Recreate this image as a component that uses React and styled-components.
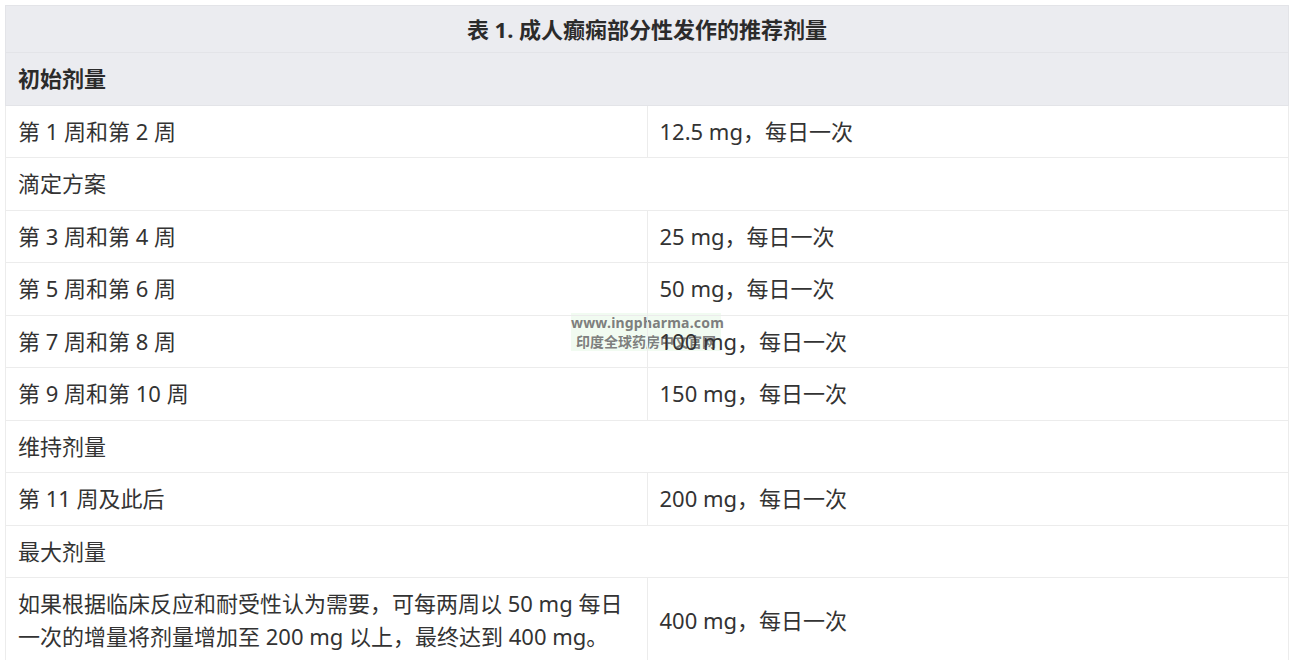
import React from 'react';
import styled, { createGlobalStyle } from 'styled-components';

const Global = createGlobalStyle`
  body {
    margin: 0;
    background: #fff;
    font-family: "Noto Sans", "Noto Sans CJK SC", sans-serif;
    color: #333;
  }
`;

const Page = styled.div`
  padding: 5px 4px 0 5px;
  position: relative;
`;

const Table = styled.table`
  position: relative;
  z-index: 1;
  width: 1284px;
  border-collapse: collapse;
  table-layout: fixed;
  font-size: 22px;
  line-height: 33px;
`;

const Caption = styled.th`
  background: #ebecf0;
  border: 1px solid #e3e4e8;
  font-size: 22px;
  font-weight: 700;
  line-height: 31px;
  padding: 7.5px 12px;
  text-align: center;
  color: #2b2b2b;
`;

const Section = styled.th`
  background: #ebecf0;
  border: 1px solid #e3e4e8;
  font-weight: 700;
  text-align: left;
  padding: 9.25px 12px;
  color: #2b2b2b;
`;

const Cell = styled.td`
  border: 1px solid #ececec;
  padding: 9.25px 12px;
  vertical-align: middle;
`;

const Watermark = styled.div`
  position: absolute;
  z-index: 0;
  left: 571px;
  top: 313px;
  width: 150px;
  height: 38px;
  background: rgba(232, 248, 232, 0.6);
  color: rgba(110, 110, 110, 0.9);
  font-family: "Noto Sans", "Noto Sans CJK SC", sans-serif;
  font-weight: 700;
  text-align: center;
  pointer-events: none;
`;

const WmLine = styled.div`
  font-size: ${p => p.size}px;
  line-height: 19px;
  letter-spacing: ${p => p.spacing || 0}px;
`;

const rows = [
  { type: 'pair', a: '第 1 周和第 2 周', b: '12.5 mg，每日一次' },
  { type: 'span', a: '滴定方案' },
  { type: 'pair', a: '第 3 周和第 4 周', b: '25 mg，每日一次' },
  { type: 'pair', a: '第 5 周和第 6 周', b: '50 mg，每日一次' },
  { type: 'pair', a: '第 7 周和第 8 周', b: '100 mg，每日一次' },
  { type: 'pair', a: '第 9 周和第 10 周', b: '150 mg，每日一次' },
  { type: 'span', a: '维持剂量' },
  { type: 'pair', a: '第 11 周及此后', b: '200 mg，每日一次' },
  { type: 'span', a: '最大剂量' },
  {
    type: 'pair',
    a: '如果根据临床反应和耐受性认为需要，可每两周以 50 mg 每日一次的增量将剂量增加至 200 mg 以上，最终达到 400 mg。',
    b: '400 mg，每日一次',
  },
];

export default function App() {
  return (
    <Page>
      <Global />
      <Table>
        <thead>
          <tr>
            <Caption colSpan={2}>表 1. 成人癫痫部分性发作的推荐剂量</Caption>
          </tr>
        </thead>
        <tbody>
          <tr>
            <Section colSpan={2}>初始剂量</Section>
          </tr>
          {rows.map((r, i) =>
            r.type === 'span' ? (
              <tr key={i}>
                <Cell colSpan={2}>{r.a}</Cell>
              </tr>
            ) : (
              <tr key={i}>
                <Cell>{r.a}</Cell>
                <Cell>{r.b}</Cell>
              </tr>
            )
          )}
        </tbody>
      </Table>
      <Watermark>
        <WmLine size={14} spacing={0.2}>www.ingpharma.com</WmLine>
        <WmLine size={14}>印度全球药房中文官网</WmLine>
      </Watermark>
    </Page>
  );
}
